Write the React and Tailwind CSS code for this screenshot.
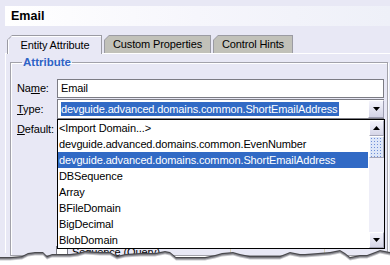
import React from 'react';

const domains = [
  '<Import Domain...>',
  'devguide.advanced.domains.common.EvenNumber',
  'devguide.advanced.domains.common.ShortEmailAddress',
  'DBSequence',
  'Array',
  'BFileDomain',
  'BigDecimal',
  'BlobDomain',
];

const Tab = ({ label, active, width }) => (
  <div
    className={`${width} ${active ? 'h-[19px] relative z-10' : 'h-[18px]'} bg-[#9b9ba3] pl-px pt-px pr-px [clip-path:polygon(0_5px,5px_0,100%_0,100%_100%,0_100%)]`}
  >
    <div
      className={`h-full flex items-center justify-center [clip-path:polygon(0_4px,4px_0,100%_0,100%_100%,0_100%)] ${
        active ? 'bg-[#e8e8f5] border-l border-t border-white' : 'bg-[#c1c1b9]'
      }`}
    >
      {label}
    </div>
  </div>
);

const Arrow = ({ up }) => (
  <svg width="7" height="4" viewBox="0 0 7 4">
    <path d={up ? 'M0 4 L3.5 0 L7 4 Z' : 'M0 0 L7 0 L3.5 4 Z'} fill="#000" />
  </svg>
);

const ScrollButton = ({ up }) => (
  <div className="h-[16px] flex items-center justify-center bg-linear-to-b from-[#f4f4fc] to-[#d6d6e8] border border-white border-r-[#a6a6b8] border-b-[#a6a6b8]">
    <Arrow up={up} />
  </div>
);

// torn paper edge along the bottom, y values relative to y=247
const TornEdge = () => {
  const pts = [
    [0, 10], [10, 10], [22, 9], [28, 6], [35, 5], [43, 5], [47, 9], [52, 7], [58, 7], [70, 7],
    [78, 6], [85, 4], [100, 5], [110, 5], [117, 9], [125, 7], [140, 6], [155, 6], [165, 4],
    [170, 5], [176, 10], [185, 10], [195, 10], [205, 10], [215, 8], [222, 6], [233, 5],
    [240, 7], [250, 9], [265, 9], [280, 9], [290, 5], [300, 7], [305, 7], [318, 6], [330, 5],
    [340, 3], [345, 6], [350, 10], [360, 8], [367, 8], [375, 5], [380, 3], [390, 5],
  ];
  const shape = (dy) =>
    'M0 18 ' + pts.map(([x, y]) => `L${x} ${y + dy}`).join(' ') + ' L390 18 Z';
  return (
    <svg className="absolute left-0 bottom-0" width="390" height="18" viewBox="0 0 390 18">
      <path d={shape(0)} fill="#4a4a4e" />
      <path d={shape(1.3)} fill="#8a8a90" />
      <path d={shape(2.5)} fill="#c8c8cc" />
      <path d={shape(3.6)} fill="#ffffff" />
    </svg>
  );
};

export default function App() {
  return (
    <div className="w-[390px] h-[265px] relative overflow-hidden bg-[#e8e8f5] text-[11px] tracking-[-0.12px] text-black font-['Liberation_Sans',Arial,sans-serif]">
      <div className="mt-[6px] ml-[5px] h-[20px] flex items-center pl-[6px] bg-linear-to-r from-white via-[#f6f6fc] to-[#eef0f8] font-bold text-[12.5px] tracking-normal">
        Email
      </div>

      <div className="mt-[9px] ml-[7px] h-[18px] flex items-start gap-[2px]">
        <Tab label="Entity Attribute" active width="w-[95px]" />
        <Tab label="Custom Properties" width="w-[107px]" />
        <Tab label="Control Hints" width="w-[80px]" />
      </div>

      <div className="ml-[5px] h-[200px] border-l border-t border-white">
        <fieldset className="mt-[2px] ml-[4px] mr-[2px] h-[200px] border border-[#a2a2aa] shadow-[inset_1px_1px_0_#fff,1px_1px_0_#fff] pl-[6px]">
          <legend className="ml-[5px] px-px leading-[13px] font-bold text-[11.5px] tracking-normal text-[#2f63c6]">Attribute</legend>

          <div className="mt-[10px] flex items-center h-[19px]">
            <span className="w-[40px]">
              Na<span className="underline">m</span>e:
            </span>
            <div className="w-[327px] h-[19px] border border-[#7c7c84] bg-white flex items-center pl-[3px]">Email</div>
          </div>

          <div className="mt-[1px] flex items-center h-[20px]">
            <span className="w-[40px]">
              <span className="underline">T</span>ype:
            </span>
            <div className="w-[327px] h-[20px] border border-[#7c7c84] border-r-0 bg-white flex items-center">
              <span className="ml-[3px] bg-[#316ac5] text-white leading-[14px] pr-px">
                devguide.advanced.domains.common.ShortEmailAddress
              </span>
              <div className="ml-auto w-[16px] h-[18px] flex items-center justify-center bg-linear-to-b from-[#f4f4fc] to-[#d4d4e6] border border-white border-r-[#9c9cb0] border-b-[#9c9cb0]">
                <Arrow />
              </div>
            </div>
          </div>

          <div className="mt-[1px] flex items-center h-[19px]">
            <span className="w-[40px]">
              <span className="underline">D</span>efault:
            </span>
            <div className="w-[327px] h-[19px] border border-[#7c7c84] bg-white" />
          </div>

          <div className="mt-[107px] flex items-start h-[14px]">
            <div className="ml-[39px] w-[12px] h-[12px] border border-[#7c7c84] bg-white" />
            <span className="ml-[4px] w-[158px] leading-[12px]">Sequence (Query)</span>
            <div className="w-[95px] h-[12px] border border-[#d6cfb8] rounded-[2px]" />
          </div>
        </fieldset>
      </div>

      <div className="absolute left-[57px] top-[119px] w-[328px] h-[130px] border border-black bg-white flex">
        <div className="flex-1">
          {domains.map((d, i) => (
            <div
              key={d}
              className={`h-[16px] leading-[16px] pl-px whitespace-nowrap ${i === 2 ? 'bg-[#316ac5] text-white' : ''}`}
            >
              {d}
            </div>
          ))}
        </div>
        <div className="w-[16px] flex flex-col bg-[#eeeef8] border-l border-white">
          <ScrollButton up />
          <div className="h-[22px] border border-white border-r-[#a6a6b8] border-b-[#a6a6b8] bg-[#dde6f8] bg-[radial-gradient(#6f8fd8_0.8px,transparent_0.9px)] bg-[length:3px_3px]" />
          <div className="flex-1" />
          <ScrollButton />
        </div>
      </div>

      <TornEdge />
    </div>
  );
}
